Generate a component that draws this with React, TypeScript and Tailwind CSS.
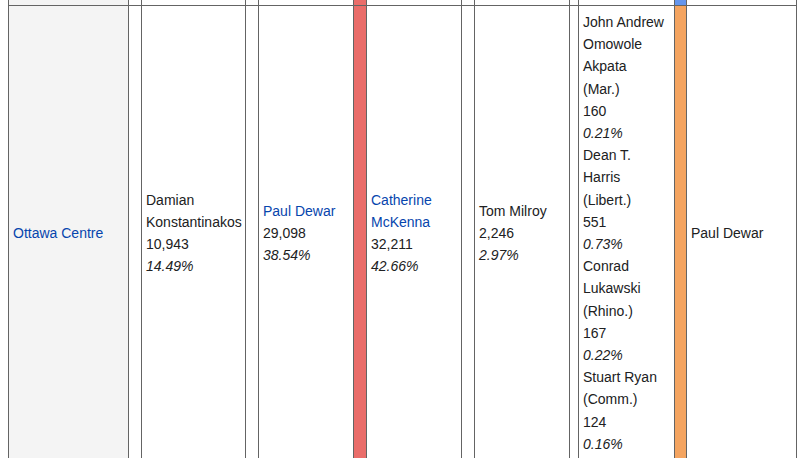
import React from 'react';

type Candidate = { name: string; party?: string; votes: string; pct: string; link?: boolean };

const PARTY = {
  con: '#6495ed',
  lib: '#ea6d6a',
  ndp: '#f4a460',
};

// only the colour strip of the row above is in view
const prevRow: (string | null)[] = ['#f4f4f4', null, null, null, null, PARTY.lib, null, null, null, null, null, PARTY.con, null];

const others: Candidate[] = [
  { name: 'John Andrew Omowole Akpata', party: 'Mar.', votes: '160', pct: '0.21%' },
  { name: 'Dean T. Harris', party: 'Libert.', votes: '551', pct: '0.73%' },
  { name: 'Conrad Lukawski', party: 'Rhino.', votes: '167', pct: '0.22%' },
  { name: 'Stuart Ryan', party: 'Comm.', votes: '124', pct: '0.16%' },
];

const Cell: React.FC<{ bg?: string; last?: boolean; top?: boolean; children?: React.ReactNode }> = ({ bg, last, top, children }) => (
  <div
    className={`border-l border-[#646464] px-[4px] pt-[5px] pb-[4px] flex flex-col justify-center ${top ? 'border-t' : ''} ${last ? 'border-r' : ''}`}
    style={bg ? { backgroundColor: bg } : undefined}
  >
    {children}
  </div>
);

const Result: React.FC<{ c: Candidate }> = ({ c }) => (
  <div>
    <div className={c.link ? 'text-[#0645ad]' : ''}>{c.name}</div>
    {c.party && <div>({c.party})</div>}
    <div>{c.votes}</div>
    <div className="italic">{c.pct}</div>
  </div>
);

export default function App() {
  return (
    <div className="w-[802px] h-[458px] overflow-hidden bg-white pl-[8px] text-[14px] leading-[22.2px] text-[#202122] font-['Liberation_Sans',Arial,sans-serif]">
      <div className="grid grid-cols-[120px_13px_104px_13px_95px_13px_95px_13px_95px_9px_96px_12px_111px] grid-rows-[5px_auto]">
        {prevRow.map((bg, i) => (
          <div
            key={i}
            className={`border-l border-[#646464] ${i === prevRow.length - 1 ? 'border-r' : ''}`}
            style={bg ? { backgroundColor: bg } : undefined}
          />
        ))}

        <Cell top bg="#f4f4f4">
          <span className="text-[#0645ad]">Ottawa Centre</span>
        </Cell>
        <Cell top />
        <Cell top>
          <Result c={{ name: 'Damian Konstantinakos', votes: '10,943', pct: '14.49%' }} />
        </Cell>
        <Cell top />
        <Cell top>
          <Result c={{ name: 'Paul Dewar', votes: '29,098', pct: '38.54%', link: true }} />
        </Cell>
        <Cell top bg={PARTY.lib} />
        <Cell top>
          <Result c={{ name: 'Catherine McKenna', votes: '32,211', pct: '42.66%', link: true }} />
        </Cell>
        <Cell top />
        <Cell top>
          <Result c={{ name: 'Tom Milroy', votes: '2,246', pct: '2.97%' }} />
        </Cell>
        <Cell top />
        <Cell top>
          {others.map((c) => (
            <Result key={c.name} c={c} />
          ))}
        </Cell>
        <Cell top bg={PARTY.ndp} />
        <Cell top last>
          <span>Paul Dewar</span>
        </Cell>
      </div>
    </div>
  );
}
